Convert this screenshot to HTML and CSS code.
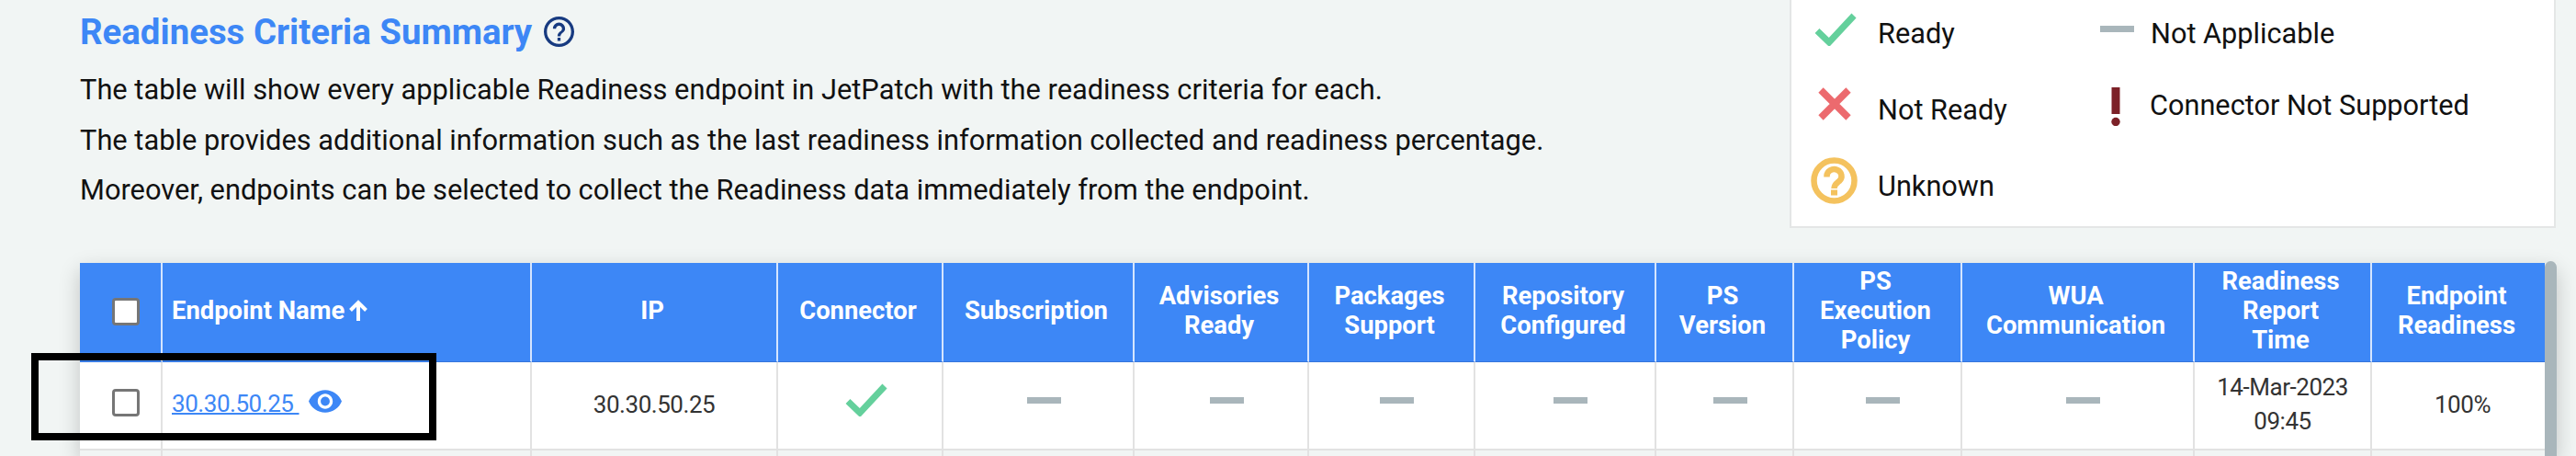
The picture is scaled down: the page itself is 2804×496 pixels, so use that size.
FILE: index.html
```
<!DOCTYPE html>
<html lang="en">
<head>
  <meta charset="UTF-8" />
  <meta name="viewport" content="width=device-width, initial-scale=1.0"/>
  <title>Readiness Criteria Summary</title>
  <link rel="stylesheet" href="styles.css">
</head>
<body>

  <svg class="sprite">
    <symbol id="check" viewBox="0 0 46 36"><path d="M3 19.500 L16 32 L43 3" fill="none" stroke="#64d09c" stroke-width="7"/></symbol>
    <symbol id="dash" viewBox="0 0 37 7"><path d="M0 0h37v7H0z" fill="#a9b6bb"/></symbol>
  </svg>

  <div class="top">
    <div class="summary">
      <h1>Readiness Criteria Summary
        <svg class="help" viewBox="2 2 20 20"><path fill="#173a80" d="M11 18h2v-2h-2v2zm1-16C6.48 2 2 6.48 2 12s4.48 10 10 10 10-4.48 10-10S17.52 2 12 2zm0 18c-4.41 0-8-3.59-8-8s3.59-8 8-8 8 3.59 8 8-3.59 8-8 8zm0-14c-2.21 0-4 1.79-4 4h2c0-1.1.9-2 2-2s2 .9 2 2c0 2-3 1.75-3 5h2c0-2.250 3-2.500 3-5 0-2.210-1.790-4-4-4z"/></svg>
      </h1>
      <p>The table will show every applicable Readiness endpoint in JetPatch with the readiness criteria for each.</p>
      <p>The table provides additional information such as the last readiness information collected and readiness percentage.</p>
      <p>Moreover, endpoints can be selected to collect the Readiness data immediately from the endpoint.</p>
    </div>

    <div class="legend">
      <div class="legend-col">
        <div class="legend-item"><svg class="i-check"><use href="#check"/></svg><span>Ready</span></div>
        <div class="legend-item"><svg class="i-cross" viewBox="0 0 36 36"><path d="M3 3 L33 33 M33 3 L3 33" stroke="#ec6a6e" stroke-width="7.500"/></svg><span>Not Ready</span></div>
        <div class="legend-item"><svg class="i-unknown" viewBox="0 0 51 51"><circle cx="25.500" cy="25.500" r="22" fill="none" stroke="#f4c25e" stroke-width="6.500"/><path d="M17.500 21.500v-1a8 7.500 0 1 1 13.500 5.500c-3 2.500-5.500 4-5.500 8" fill="none" stroke="#f4c25e" stroke-width="6.500"/><path d="M22 35.500h7v6h-7z" fill="#f4c25e"/></svg><span>Unknown</span></div>
      </div>
      <div class="legend-col second">
        <div class="legend-item"><svg class="i-dash"><use href="#dash"/></svg><span>Not Applicable</span></div>
        <div class="legend-item"><svg class="i-excl" viewBox="0 0 10 42"><path d="M0.500 0h9v29h-9z" fill="#7c2128"/><circle cx="5" cy="37.500" r="4.700" fill="#7c2128"/></svg><span>Connector Not Supported</span></div>
      </div>
    </div>
  </div>

  <div class="table-wrap">
    <table>
      <colgroup>
        <col class="c1"><col class="c2"><col class="c3"><col class="c4"><col class="c5"><col class="c6"><col class="c7">
        <col class="c8"><col class="c9"><col class="c10"><col class="c11"><col class="c12"><col class="c13">
      </colgroup>
      <thead>
        <tr>
          <th><span class="checkbox"></span></th>
          <th class="left">Endpoint Name<svg class="arrow" viewBox="0 0 20 23"><path d="M10 23V4M1.500 11.500L10 3l8.500 8.500" fill="none" stroke="#fff" stroke-width="4"/></svg></th>
          <th>IP</th>
          <th>Connector</th>
          <th>Subscription</th>
          <th>Advisories<br>Ready</th>
          <th>Packages<br>Support</th>
          <th>Repository<br>Configured</th>
          <th>PS<br>Version</th>
          <th>PS<br>Execution<br>Policy</th>
          <th>WUA<br>Communication</th>
          <th>Readiness<br>Report<br>Time</th>
          <th>Endpoint<br>Readiness</th>
        </tr>
      </thead>
      <tbody>
        <tr>
          <td><span class="checkbox"></span></td>
          <td class="left"><a href="#">30.30.50.25&nbsp;</a><svg class="eye" viewBox="1 4.500 22 15"><path fill="#3d87f6" d="M12 4.500C7 4.500 2.730 7.610 1 12c1.730 4.390 6 7.500 11 7.500s9.270-3.110 11-7.500c-1.730-4.390-6-7.500-11-7.500zM12 17c-2.760 0-5-2.240-5-5s2.240-5 5-5 5 2.240 5 5-2.240 5-5 5zm0-8c-1.660 0-3 1.340-3 3s1.340 3 3 3 3-1.340 3-3-1.340-3-3-3z"/></svg></td>
          <td>30.30.50.25</td>
          <td class="status"><svg class="i-check"><use href="#check"/></svg></td>
          <td class="status"><svg class="i-dash"><use href="#dash"/></svg></td>
          <td class="status"><svg class="i-dash"><use href="#dash"/></svg></td>
          <td class="status"><svg class="i-dash"><use href="#dash"/></svg></td>
          <td class="status"><svg class="i-dash"><use href="#dash"/></svg></td>
          <td class="status"><svg class="i-dash"><use href="#dash"/></svg></td>
          <td class="status"><svg class="i-dash"><use href="#dash"/></svg></td>
          <td class="status"><svg class="i-dash"><use href="#dash"/></svg></td>
          <td>14-Mar-2023<br>09:45</td>
          <td class="percent">100%</td>
        </tr>
        <tr class="next">
          <td></td><td></td><td></td><td></td><td></td><td></td><td></td><td></td><td></td><td></td><td></td><td></td><td></td>
        </tr>
      </tbody>
    </table>
    <div class="scrollbar"></div>
    <div class="highlight"></div>
  </div>

</body>
</html>
```
FILE: styles.css
```
* {
  box-sizing: border-box;
}
body {
  margin: 0;
  height: 496px;
  overflow: hidden;
  background: #f1f5f4;
  font-family: Roboto, "Liberation Sans", sans-serif;
  color: #111;
}
.sprite {
  display: none;
}
svg {
  display: block;
  flex: none;
}
.top {
  display: flex;
  justify-content: space-between;
  height: 286px;
  padding: 0 22px 0 87px;
}
h1 {
  display: flex;
  align-items: center;
  gap: 13px;
  margin: 13px 0 14px;
  font-size: 38.4px;
  line-height: 44px;
  font-weight: 700;
  color: #3d87f6;
}
.help {
  width: 33px;
  height: 33px;
  margin-top: -2px;
}
p {
  margin: 0;
  font-size: 30.8px;
  line-height: 54.5px;
}
.legend {
  display: flex;
  width: 834px;
  height: 248px;
  background: #fff;
  border: 2px solid #e4e6e6;
  border-top: none;
  font-size: 30.7px;
}
.legend-col {
  width: 314px;
  padding: 0 0 0 21px;
}
.legend-col.second {
  width: auto;
  padding-left: 22px;
}
.legend-item {
  display: flex;
  align-items: flex-start;
  height: 83px;
  line-height: 36px;
}
.legend-item span {
  padding-top: 19px;
}
.i-check {
  width: 46px;
  height: 36px;
}
.legend .i-check {
  margin: 14px 23px 0 4px;
}
.i-cross {
  width: 36px;
  height: 36px;
  margin: 12px 29px 0 8px;
}
.i-unknown {
  width: 51px;
  height: 51px;
  margin: 5px 22px 0 0;
}
.i-dash {
  width: 37px;
  height: 7px;
}
.legend .i-dash {
  margin: 28px 18px 0 0;
}
.i-excl {
  width: 10px;
  height: 42px;
  margin: 12px 32px 0 12px;
}
.second .i-excl + span {
  padding-top: 14px;
}
.table-wrap {
  position: relative;
  display: flex;
  width: 2696px;
  height: 210px;
  margin-left: 87px;
  box-shadow: 0 8px 22px rgba(0, 0, 0, .2);
}
table {
  width: 2683px;
  table-layout: fixed;
  border-collapse: separate;
  border-spacing: 0;
}
.c1 { width: 90px; }
.c2 { width: 402px; }
.c3 { width: 268px; }
.c4 { width: 180px; }
.c5 { width: 208px; }
.c6 { width: 190px; }
.c7 { width: 181px; }
.c8 { width: 197px; }
.c9 { width: 150px; }
.c10 { width: 183px; }
.c11 { width: 253px; }
.c12 { width: 193px; }
.c13 { width: 188px; }
th, td {
  padding: 0;
  text-align: center;
  vertical-align: middle;
  border-right: 2px solid #e2e2e2;
}
th:last-child, td:last-child {
  border-right: none;
}
th {
  height: 108px;
  padding: 0 4px 3px 0;
  background: #3d87f6;
  border-color: #d5e5ff;
  border-bottom: 1px solid #3575dc;
  color: #fff;
  font-size: 27.4px;
  font-weight: 700;
  line-height: 32.3px;
}
td {
  height: 96px;
  padding-bottom: 2px;
  background: #fff;
  border-bottom: 2px solid #e2e2e2;
  color: #333;
  font-size: 26px;
  letter-spacing: -.45px;
  line-height: 36.7px;
}
.next td {
  height: 6px;
  padding: 0;
  background: #f1f5f4;
  border-bottom: none;
}
th.left, td.left {
  padding-left: 10px;
  text-align: left;
}
td.left {
  padding-bottom: 4px;
}
td.percent {
  padding-left: 9px;
}
.checkbox {
  display: block;
  width: 30px;
  height: 30px;
  margin-left: 35px;
  background: #fff;
  border: 3px solid #767676;
  border-radius: 4px;
}
th .checkbox {
  margin-top: 2px;
}
td .checkbox {
  margin-bottom: 5px;
}
.arrow {
  display: inline-block;
  width: 20px;
  height: 23px;
  margin-left: 5px;
  vertical-align: -2px;
}
a {
  color: #3d87f6;
  text-decoration-thickness: 2px;
}
.eye {
  display: inline-block;
  width: 36px;
  height: 25px;
  margin-left: 10px;
  vertical-align: -1px;
}
.status svg {
  margin: 0 auto;
}
.status .i-dash {
  transform: translate(6px, -5px);
}
.status .i-check {
  transform: translate(7px, -5px);
}
.scrollbar {
  width: 14px;
  height: 212px;
  margin-top: -2px;
  background: #a9b6bb;
  border-radius: 7px 7px 0 0;
}
/* marks the endpoint row */
.highlight {
  position: absolute;
  left: -53px;
  top: 98px;
  width: 441px;
  height: 95px;
  border: 8px solid #000;
}
```
